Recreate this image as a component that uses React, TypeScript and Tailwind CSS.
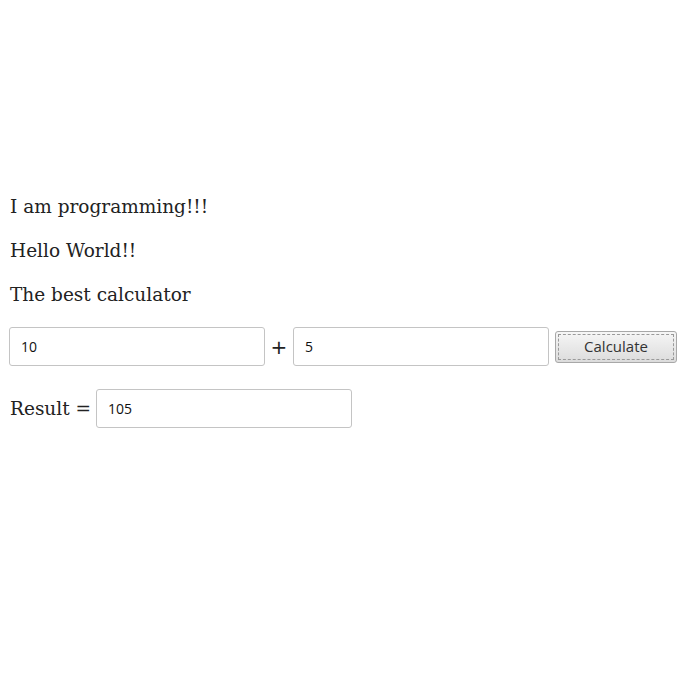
export default function App() {
  return (
    <div className="h-[700px] w-[700px] bg-white pt-[193px] pl-[10px] font-['DejaVu_Serif',serif] text-[18.5px] text-[#222]">
      <p className="h-[44px] leading-[28px]">I am programming!!!</p>
      <p className="h-[44px] leading-[28px]">Hello World!!</p>
      <p className="h-[46px] leading-[28px]">The best calculator</p>

      <div className="flex items-center">
        <input
          defaultValue="10"
          className="-ml-px h-[39px] w-[256px] rounded-[3px] border border-[#c4c4c4] px-[11px] font-['Open_Sans',sans-serif] text-[14px] font-medium text-[#111] outline-none"
        />
        <span className="w-[28px] text-center font-['DejaVu_Sans',sans-serif] text-[20px]">+</span>
        <input
          defaultValue="5"
          className="h-[39px] w-[256px] rounded-[3px] border border-[#c4c4c4] px-[11px] font-['Open_Sans',sans-serif] text-[14px] font-medium text-[#111] outline-none"
        />
        <button className="ml-[6px] h-[32px] w-[122px] rounded-[3px] border border-[#a8a8a8] bg-gradient-to-b from-[#f6f6f6] to-[#dcdcdc] p-[2px] font-['Open_Sans',sans-serif] text-[15px] text-[#333]">
          <span className="flex h-full w-full items-center justify-center border border-dashed border-[#9a9a9a]">Calculate</span>
        </button>
      </div>

      <div className="mt-[23px] flex items-center">
        <span className="pr-[5px]">Result =</span>
        <input
          defaultValue="105"
          className="h-[39px] w-[256px] rounded-[3px] border border-[#c4c4c4] px-[11px] font-['Open_Sans',sans-serif] text-[14px] font-medium text-[#111] outline-none"
        />
      </div>
    </div>
  )
}
